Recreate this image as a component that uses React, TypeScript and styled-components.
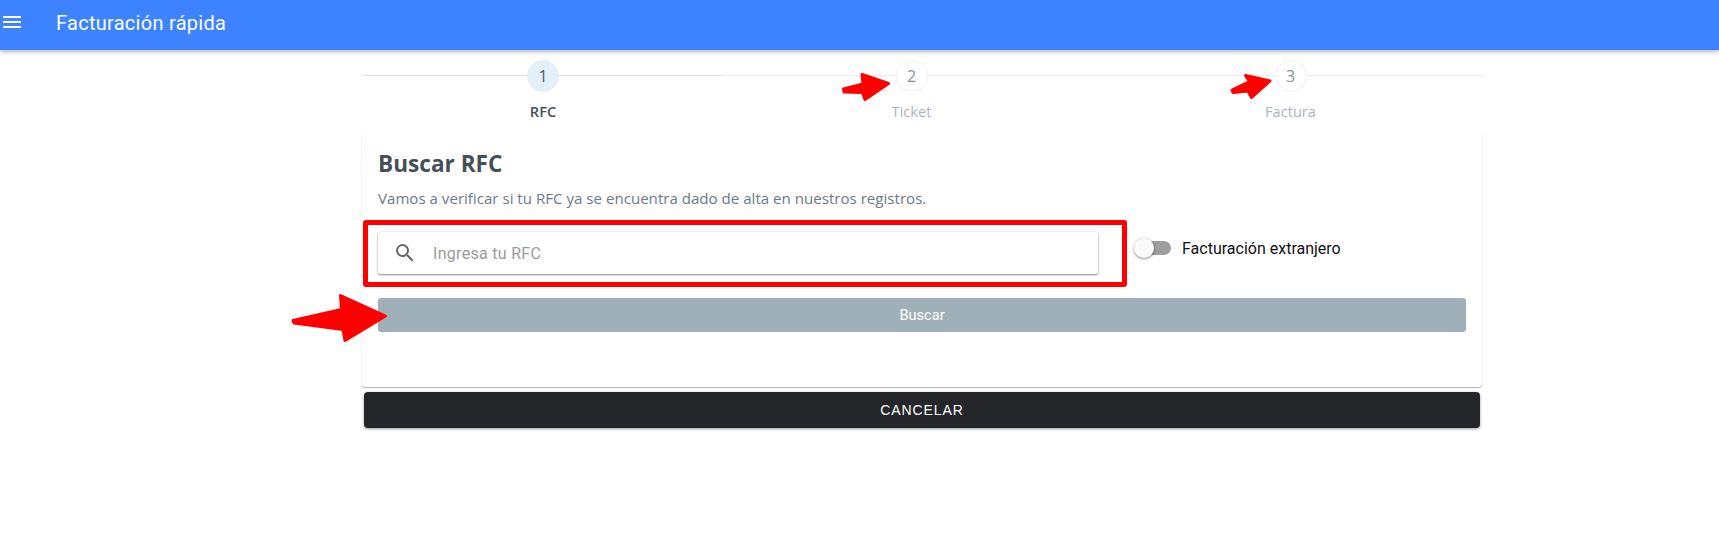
import React from "react";
import styled, { createGlobalStyle } from "styled-components";

const GlobalStyle = createGlobalStyle`
  html, body { margin: 0; padding: 0; background: #fff; }
  body { font-family: Roboto, "Liberation Sans", sans-serif; overflow: hidden; }
`;

const Page = styled.div`
  position: relative;
  width: 1719px;
  height: 533px;
`;

const TopBar = styled.header`
  display: flex;
  align-items: center;
  height: 50px;
  background: #3d82ff;
  box-shadow: 0 2px 4px rgba(0, 0, 0, 0.28);
  color: #fff;
`;

const MenuIcon = styled.svg`
  width: 24px;
  height: 24px;
  margin: -6px 0 0 0;
  flex: none;
`;

const Title = styled.h1`
  margin: 0 0 5px 32px;
  font-size: 20px;
  letter-spacing: 0.28px;
  font-weight: 400;
`;

const Content = styled.main`
  width: 1120px;
  margin-left: 362px;
  padding-top: 10px;
`;

const Stepper = styled.ol`
  display: grid;
  grid-template-columns: 362px 375px 383px;
  margin: 0;
  padding: 0;
  list-style: none;
`;

const Step = styled.li`
  position: relative;
  display: flex;
  flex-direction: column;
  align-items: center;
  height: 71px;

  &::before {
    content: "";
    position: absolute;
    top: 15px;
    left: 0;
    right: 0;
    height: 1px;
    background: ${(p) => (p.$active ? "#e0e0e0" : "#ececec")};
  }
`;

const StepCircle = styled.span`
  position: relative;
  box-sizing: border-box;
  display: flex;
  align-items: center;
  justify-content: center;
  width: 32px;
  height: 32px;
  border-radius: 50%;
  border: 1px solid ${(p) => (p.$active ? "#e3f0fa" : "#f2f2f2")};
  background: ${(p) => (p.$active ? "#e3f0fa" : "#fff")};
  color: ${(p) => (p.$active ? "#48596a" : "#88929b")};
  font-family: "Open Sans", sans-serif;
  font-size: 16px;
`;

const StepLabel = styled.span`
  margin-top: 9px;
  font-family: "Open Sans", sans-serif;
  font-size: 14.6px;
  font-weight: ${(p) => (p.$active ? 600 : 400)};
  color: ${(p) => (p.$active ? "#454f58" : "#adb5bd")};
`;

const Card = styled.section`
  box-sizing: border-box;
  height: 256px;
  padding: 17px 16px 0;
  background: #fff;
  border-radius: 4px;
  box-shadow: 0 1px 1px rgba(0, 0, 0, 0.3), 0 0 2px rgba(0, 0, 0, 0.06);
`;

const CardTitle = styled.h2`
  margin: 0;
  font-family: "Open Sans", sans-serif;
  font-size: 22.6px;
  line-height: 32px;
  font-weight: 700;
  color: #454f58;
`;

const CardText = styled.p`
  margin: 8px 0 0;
  font-family: "Open Sans", sans-serif;
  font-size: 15.1px;
  line-height: 20px;
  color: #6c7a86;
`;

const SearchRow = styled.div`
  display: flex;
  align-items: center;
  margin-top: 24px;
`;

const SearchBox = styled.div`
  display: flex;
  align-items: center;
  box-sizing: border-box;
  width: 720px;
  height: 42px;
  padding-left: 15px;
  border-radius: 2px;
  background: #fff;
  box-shadow: 0 1px 2px rgba(0, 0, 0, 0.45), 0 0 3px rgba(0, 0, 0, 0.08);
`;

const SearchIcon = styled.svg`
  width: 24px;
  height: 24px;
  flex: none;
  fill: #666;
`;

const SearchInput = styled.input`
  flex: 1;
  margin-left: 14px;
  border: 0;
  outline: 0;
  background: transparent;
  font-family: Roboto, sans-serif;
  font-size: 16px;
  letter-spacing: 0.3px;
  color: #333;

  &::placeholder {
    color: #9a9a9a;
    opacity: 1;
  }
`;

const SwitchField = styled.label`
  display: flex;
  align-items: center;
  margin: -10px 0 0 39px;
  font-family: Roboto, sans-serif;
  font-size: 16px;
  color: #111;
`;

const SwitchTrack = styled.span`
  position: relative;
  display: block;
  width: 34px;
  height: 14px;
  border-radius: 7px;
  background: #9e9e9e;
  margin-right: 11px;
`;

const SwitchThumb = styled.span`
  position: absolute;
  left: -3px;
  top: -3px;
  width: 20px;
  height: 20px;
  border-radius: 50%;
  background: #fafafa;
  box-shadow: 0 1px 3px rgba(0, 0, 0, 0.45);
`;

const SearchButton = styled.button`
  display: block;
  width: 100%;
  height: 34px;
  margin-top: 24px;
  border: 0;
  border-radius: 3px;
  background: #9fb0b8;
  color: #fff;
  font-family: Roboto, sans-serif;
  font-size: 14.6px;
`;

const CancelButton = styled.button`
  display: block;
  width: 1116px;
  height: 36px;
  margin: 5px 0 0 2px;
  border: 0;
  border-radius: 4px;
  background: #25262a;
  color: #fff;
  font-family: "Liberation Sans", sans-serif;
  font-size: 14px;
  letter-spacing: 0.9px;
  box-shadow: 0 1px 3px rgba(0, 0, 0, 0.4);
`;

/* anotaciones rojas encima de la captura */
const RedBox = styled.div`
  position: absolute;
  left: 363px;
  top: 220px;
  box-sizing: border-box;
  width: 764px;
  height: 67px;
  border: 5px solid #ff0000;
  border-radius: 3px;
  pointer-events: none;
`;

const Arrow = styled.svg`
  position: absolute;
  left: ${(p) => p.$x}px;
  top: ${(p) => p.$y}px;
  fill: #ff0000;
  stroke: #ff0000;
  stroke-width: 3;
  stroke-linejoin: round;
`;

const steps = [
  { n: 1, label: "RFC", active: true },
  { n: 2, label: "Ticket", active: false },
  { n: 3, label: "Factura", active: false },
];

export default function App() {
  return (
    <Page>
      <GlobalStyle />
      <TopBar>
        <MenuIcon viewBox="0 0 24 24" fill="#fff">
          <path d="M3 18h18v-2H3v2zm0-5h18v-2H3v2zm0-7v2h18V6H3z" />
        </MenuIcon>
        <Title>Facturación rápida</Title>
      </TopBar>
      <Content>
        <Stepper>
          {steps.map((s) => (
            <Step key={s.n} $active={s.active}>
              <StepCircle $active={s.active}>{s.n}</StepCircle>
              <StepLabel $active={s.active}>{s.label}</StepLabel>
            </Step>
          ))}
        </Stepper>
        <Card>
          <CardTitle>Buscar RFC</CardTitle>
          <CardText>Vamos a verificar si tu RFC ya se encuentra dado de alta en nuestros registros.</CardText>
          <SearchRow>
            <SearchBox>
              <SearchIcon viewBox="0 0 24 24">
                <path d="M15.5 14h-.79l-.28-.27A6.47 6.47 0 0 0 16 9.5 6.5 6.5 0 1 0 9.5 16c1.61 0 3.09-.59 4.23-1.57l.27.28v.79l5 4.99L20.49 19l-4.99-5zm-6 0C7.01 14 5 11.99 5 9.5S7.01 5 9.5 5 14 7.01 14 9.5 11.99 14 9.5 14z" />
              </SearchIcon>
              <SearchInput placeholder="Ingresa tu RFC" />
            </SearchBox>
            <SwitchField>
              <SwitchTrack>
                <SwitchThumb />
              </SwitchTrack>
              Facturación extranjero
            </SwitchField>
          </SearchRow>
          <SearchButton>Buscar</SearchButton>
        </Card>
        <CancelButton>CANCELAR</CancelButton>
      </Content>
      <RedBox />
      <Arrow $x={838} $y={70} width="56" height="34" viewBox="838 70 56 34">
        <path d="M843.5 89 L863 84 L862 74.5 L888.5 83.5 L865 99.5 L862.5 92.5 L844 92 Z" />
      </Arrow>
      <Arrow $x={1228} $y={72} width="46" height="30" viewBox="1228 72 46 30">
        <path d="M1232 90 L1249.5 81.5 L1245.5 75.5 L1270 81 L1251.5 97.5 L1248 91 L1233 92.5 Z" />
      </Arrow>
      <Arrow $x={288} $y={291} width="102" height="54" viewBox="288 291 102 54">
        <path d="M293 320.5 L341.5 309.5 L340.5 295.5 L385.5 316 L345 340.5 L343 329.5 L294 323 Z" />
      </Arrow>
    </Page>
  );
}
